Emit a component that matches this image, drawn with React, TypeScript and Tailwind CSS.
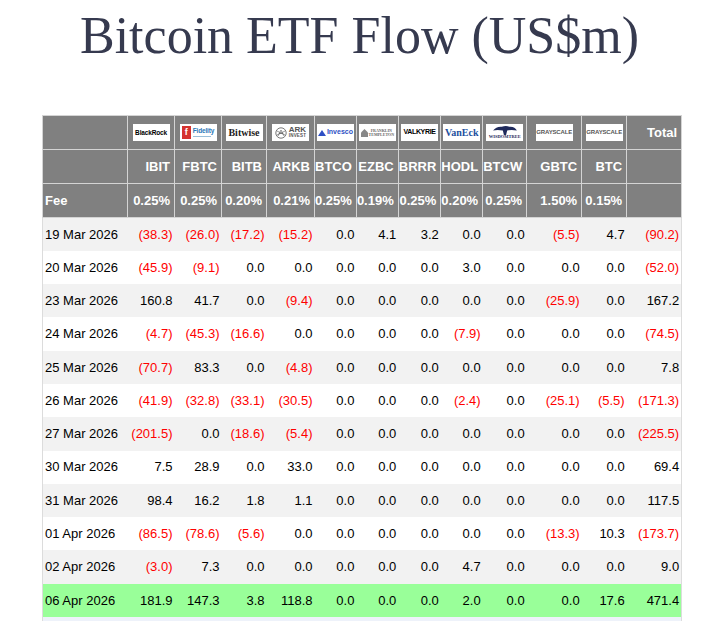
import React from "react";

type Row = { date: string; vals: string[]; tone: "grey" | "white" | "green" };

const raw: [string, string][] = [
  ["19 Mar 2026", "(38.3) (26.0) (17.2) (15.2) 0.0 4.1 3.2 0.0 0.0 (5.5) 4.7 (90.2)"],
  ["20 Mar 2026", "(45.9) (9.1) 0.0 0.0 0.0 0.0 0.0 3.0 0.0 0.0 0.0 (52.0)"],
  ["23 Mar 2026", "160.8 41.7 0.0 (9.4) 0.0 0.0 0.0 0.0 0.0 (25.9) 0.0 167.2"],
  ["24 Mar 2026", "(4.7) (45.3) (16.6) 0.0 0.0 0.0 0.0 (7.9) 0.0 0.0 0.0 (74.5)"],
  ["25 Mar 2026", "(70.7) 83.3 0.0 (4.8) 0.0 0.0 0.0 0.0 0.0 0.0 0.0 7.8"],
  ["26 Mar 2026", "(41.9) (32.8) (33.1) (30.5) 0.0 0.0 0.0 (2.4) 0.0 (25.1) (5.5) (171.3)"],
  ["27 Mar 2026", "(201.5) 0.0 (18.6) (5.4) 0.0 0.0 0.0 0.0 0.0 0.0 0.0 (225.5)"],
  ["30 Mar 2026", "7.5 28.9 0.0 33.0 0.0 0.0 0.0 0.0 0.0 0.0 0.0 69.4"],
  ["31 Mar 2026", "98.4 16.2 1.8 1.1 0.0 0.0 0.0 0.0 0.0 0.0 0.0 117.5"],
  ["01 Apr 2026", "(86.5) (78.6) (5.6) 0.0 0.0 0.0 0.0 0.0 0.0 (13.3) 10.3 (173.7)"],
  ["02 Apr 2026", "(3.0) 7.3 0.0 0.0 0.0 0.0 0.0 4.7 0.0 0.0 0.0 9.0"],
  ["06 Apr 2026", "181.9 147.3 3.8 118.8 0.0 0.0 0.0 2.0 0.0 0.0 17.6 471.4"],
];

const rows: Row[] = raw.map(([date, v], i) => ({
  date,
  vals: v.split(" "),
  tone: i === raw.length - 1 ? "green" : i % 2 === 0 ? "grey" : "white",
}));

const widths = [85, 47, 47, 45, 48, 41, 41, 42, 41, 44, 55, 45, 55];
const tickers = ["IBIT", "FBTC", "BITB", "ARKB", "BTCO", "EZBC", "BRRR", "HODL", "BTCW", "GBTC", "BTC"];
const fees = ["0.25%", "0.25%", "0.20%", "0.21%", "0.25%", "0.19%", "0.25%", "0.20%", "0.25%", "1.50%", "0.15%"];

// little white logo tiles in the first header row
function LogoBox({ children }: { children: React.ReactNode }) {
  return (
    <div className="mx-auto flex h-[17px] w-[37px] items-center justify-center overflow-hidden bg-white">
      {children}
    </div>
  );
}

function Logo({ i }: { i: number }) {
  switch (i) {
    case 0:
      return (
        <LogoBox>
          <span className="text-[6.5px] font-bold tracking-tight text-black">BlackRock</span>
        </LogoBox>
      );
    case 1:
      return (
        <LogoBox>
          <div className="flex items-center gap-[2px]">
            <div className="flex h-[13px] w-[9px] items-center justify-center bg-[#d5322f] text-[9px] font-bold leading-none text-white">f</div>
            <div className="flex flex-col leading-none">
              <span className="text-[6.5px] font-bold tracking-tight text-[#2a78b8]">Fidelity</span>
              <span className="mt-[1px] h-[1px] w-[18px] bg-[#9bbfd9]" />
            </div>
          </div>
        </LogoBox>
      );
    case 2:
      return (
        <LogoBox>
          <span className="font-['Liberation_Serif',serif] text-[10px] leading-none text-[#222]">Bitwise</span>
        </LogoBox>
      );
    case 3:
      return (
        <LogoBox>
          <div className="flex items-center gap-[2px]">
            <svg width="12" height="12" viewBox="0 0 12 12">
              <circle cx="6" cy="6" r="5.2" fill="none" stroke="#555" strokeWidth="0.8" />
              <path d="M3 9 L6 3 L9 9 M4 6.5 H8 M2 4 L10 8 M2 8 L10 4" fill="none" stroke="#555" strokeWidth="0.6" />
            </svg>
            <div className="flex flex-col leading-none text-[#555]">
              <span className="text-[8px] font-bold">ARK</span>
              <span className="text-[4.5px] tracking-wider">INVEST</span>
            </div>
          </div>
        </LogoBox>
      );
    case 4:
      return (
        <LogoBox>
          <div className="flex items-center gap-[1px]">
            <svg width="8" height="6" viewBox="0 0 8 6">
              <path d="M0 6 L4 0 L8 6 Z" fill="#2e4fc4" />
            </svg>
            <span className="text-[7px] font-bold text-[#2e4fc4]">Invesco</span>
          </div>
        </LogoBox>
      );
    case 5:
      return (
        <LogoBox>
          <div className="flex items-center gap-[1px]">
            <svg width="7" height="8" viewBox="0 0 7 8">
              <path d="M0 8 V3.5 L3.5 0 L7 3.5 V8 Z" fill="#888" />
            </svg>
            <div className="flex flex-col font-['Liberation_Serif',serif] text-[4px] leading-none text-[#666]">
              <span>FRANKLIN</span>
              <span>TEMPLETON</span>
            </div>
          </div>
        </LogoBox>
      );
    case 6:
      return (
        <LogoBox>
          <span className="text-[7px] font-bold tracking-tighter text-black">VALKYRIE</span>
        </LogoBox>
      );
    case 7:
      return (
        <LogoBox>
          <span className="font-['Liberation_Serif',serif] text-[10px] font-bold leading-none text-[#1d4f9e]">VanEck</span>
        </LogoBox>
      );
    case 8:
      return (
        <LogoBox>
          <div className="flex flex-col items-center leading-none">
            <svg width="26" height="10" viewBox="0 0 24 9">
              <path d="M1 5 Q4 1 9 1.5 Q13 0 16 1.5 Q21 1 23 5 Q18 4 14 5 L13 9 L11 9 L10 5 Q5 4 1 5 Z" fill="#1f2a5c" />
            </svg>
            <span className="font-['Liberation_Serif',serif] text-[4.5px] text-[#1f2a5c]">WISDOMTREE</span>
          </div>
        </LogoBox>
      );
    default:
      return (
        <LogoBox>
          <span className="text-[6px] tracking-tight text-[#555]">GRAYSCALE</span>
        </LogoBox>
      );
  }
}

function Cell({ v }: { v: string }) {
  const neg = v.startsWith("(");
  return (
    <td className={`pr-[2px] text-right ${neg ? "text-[#ff0000]" : "text-black"}`}>{v}</td>
  );
}

export default function App() {
  const base = "border border-[#d4d4d4] bg-[#808080] font-bold text-white";
  const hd = `${base} pr-[4px] text-right`;
  return (
    <div className="h-[621px] w-full overflow-hidden bg-white font-['Liberation_Sans',Arial,sans-serif]">
      <h1 className="pt-[10px] text-center font-['Liberation_Serif','Times_New_Roman',serif] text-[52px] leading-[52px] text-[#363a4f]">
        Bitcoin ETF Flow (US$m)
      </h1>

      <table className="ml-[42px] mt-[53px] table-fixed border-collapse border border-[#dcdcdc] text-[13px]">
        <colgroup>
          {widths.map((w, i) => (
            <col key={i} style={{ width: w }} />
          ))}
        </colgroup>
        <thead>
          <tr className="h-[34px]">
            <th className={hd} />
            {tickers.map((t, i) => (
              <th key={t} className={`${base} px-0`}>
                <Logo i={i} />
              </th>
            ))}
            <th className={hd}>Total</th>
          </tr>
          <tr className="h-[34px]">
            <th className={hd} />
            {tickers.map((t) => (
              <th key={t} className={hd}>
                {t}
              </th>
            ))}
            <th className={hd} />
          </tr>
          <tr className="h-[34px]">
            <th className={`${base} pl-[2px] text-left`}>Fee</th>
            {fees.map((f, i) => (
              <th key={i} className={hd}>
                {f}
              </th>
            ))}
            <th className={hd} />
          </tr>
        </thead>
        <tbody>
          {rows.map((r) => (
            <tr
              key={r.date}
              className={`h-[33.3px] ${r.tone === "green" ? "bg-[#99ff99]" : r.tone === "grey" ? "bg-[#f2f2f2]" : "bg-white"}`}
            >
              <td className="pl-[2px] text-left text-black">{r.date}</td>
              {r.vals.map((v, i) => (
                <Cell key={i} v={v} />
              ))}
            </tr>
          ))}
          <tr className="h-[33px] bg-[#eef2fa]">
            <td colSpan={13} />
          </tr>
        </tbody>
      </table>
    </div>
  );
}
